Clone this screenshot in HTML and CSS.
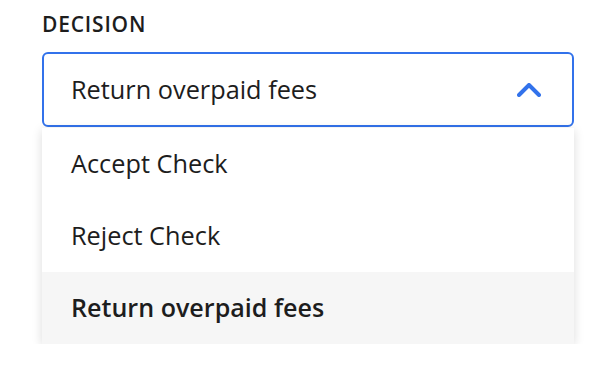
FILE: index.html
```html
<!DOCTYPE html>
<html lang="en">
<head>
<meta charset="utf-8">
<title>Decision</title>
<link rel="stylesheet" href="styles.css">
</head>
<body>
<div class="field">
  <div class="label">DECISION</div>
  <div class="select">
    <span class="value">Return overpaid fees</span>
    <svg class="chev" width="24" height="14" viewBox="0 0 24 14" aria-hidden="true"><polyline points="2,12 12,2 22,12" fill="none" stroke="#3272eb" stroke-width="4" stroke-linecap="round" stroke-linejoin="round"/></svg>
  </div>
  <ul class="menu">
    <li class="option">Accept Check</li>
    <li class="option">Reject Check</li>
    <li class="option selected">Return overpaid fees</li>
  </ul>
</div>
</body>
</html>
```
FILE: styles.css
```css
html, body {
  margin: 0;
  padding: 0;
  background: #ffffff;
}
body {
  font-family: "Open Sans", "Noto Sans", sans-serif;
  color: #1d1d1d;
}
.field {
  width: 532px;
  padding: 14px 0 0 42px;
}
.label {
  font-size: 21px;
  line-height: 20px;
  font-weight: 600;
  letter-spacing: 0.8px;
  margin-bottom: 18px;
}
.select {
  box-sizing: border-box;
  height: 75px;
  border: 2px solid #3272eb;
  border-radius: 6px;
  display: flex;
  align-items: center;
  justify-content: space-between;
  padding: 0 31px 0 27px;
  font-size: 25.3px;
}
.value {
  padding-bottom: 2px;
}
.chev {
  display: block;
}
.menu {
  list-style: none;
  margin: 1px 0 0;
  padding: 0;
  background: #ffffff;
  box-shadow: 0 2px 10px rgba(0, 0, 0, 0.14);
}
.option {
  height: 72px;
  display: flex;
  align-items: center;
  padding: 0 0 3px 29px;
  box-sizing: border-box;
  font-size: 25.3px;
}
.option.selected {
  background: #f6f6f6;
  font-weight: 600;
  font-size: 25.1px;
}
```
